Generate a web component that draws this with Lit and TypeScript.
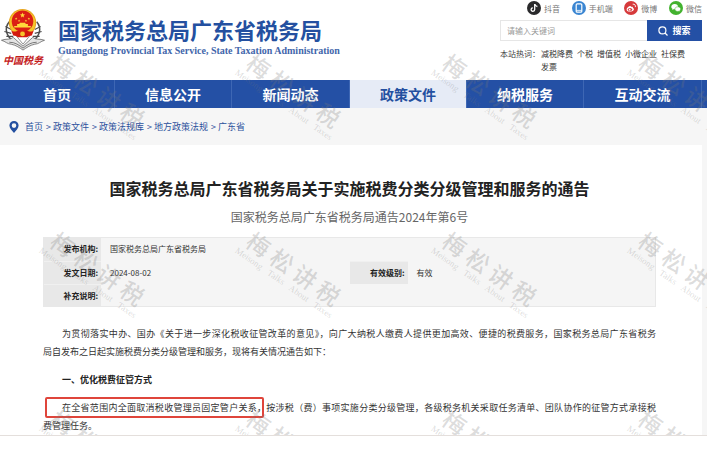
import { LitElement, html, css, svg, nothing } from "lit";
import { customElement } from "lit/decorators.js";

const NAV = ["首页", "信息公开", "新闻动态", "政策文件", "纳税服务", "互动交流"];
const ACTIVE = "政策文件";
const CRUMBS = ["首页", "政策文件", "政策法规库", "地方政策法规", "广东省"];
const HOT = ["减税降费", "个税", "增值税", "小微企业", "社保费", "发票"];

const star = (cx: number, cy: number, r: number) => {
  const pts: string[] = [];
  for (let i = 0; i < 10; i++) {
    const a = -Math.PI / 2 + (i * Math.PI) / 5;
    const k = i % 2 ? r * 0.42 : r;
    pts.push(`${(cx + k * Math.cos(a)).toFixed(2)},${(cy + k * Math.sin(a)).toFixed(2)}`);
  }
  return svg`<polygon points=${pts.join(" ")} fill="#ffd93b"/>`;
};

const emblem = html`<svg class="emblem" viewBox="0 0 46 48" role="img" aria-label="税徽">
  <g fill="none" stroke="#4c4c4c" stroke-width="1.5">
    <path d="M9 16C4 22 5 30 13 36M37 16c5 6 4 14-4 20"/>
    <path d="M5 21l6 3M4 26l7 2M6 31l7 0M10 17l3 4M41 21l-6 3M42 26l-7 2M40 31l-7 0M36 17l-3 4" stroke-width="1.2"/>
  </g>
  <path d="M1 35c5-2 9 0 12-3l10 9 10-9c3 3 7 1 12 3-4 1-6 4-10 4-5 1-9 4-12 6-3-2-7-5-12-6-4 0-6-3-10-4z" fill="#e4e4e4" stroke="#666" stroke-width=".8"/>
  <path d="M9 37c6 0 10 3 14 6 4-3 8-6 14-6" fill="none" stroke="#777" stroke-width="1"/>
  <path d="M15 29l8 10 8-10z" fill="#fff" stroke="#777" stroke-width=".8"/>
  <circle cx="22.500" cy="17" r="14" fill="#e8a51e"/>
  <circle cx="22.500" cy="17" r="13" fill="#f6c62b"/>
  <circle cx="22.500" cy="15.500" r="11" fill="#db1f14"/>
  ${star(22.5, 9.5, 2.8)}${star(16, 13, 1.3)}${star(19, 15, 1.3)}${star(26, 15, 1.3)}${star(29, 13, 1.3)}
  <path d="M14 22h17v-1.500h-3v-2h-2l-1-1.500h-5l-1 1.500h-2v2h-3z" fill="#ffd93b"/>
  <path d="M11 25c3 2 5 1 7 0l4.500 1.500L27 25c2 1 4 2 7 0l-2 5c-2 0-4 1-5 2h-9c-1-1-3-2-5-2z" fill="#d3190f"/>
  <circle cx="22.500" cy="28.500" r="2.500" fill="#f6c62b"/>
</svg>`;

const icons = {
  douyin: svg`<circle cx="7" cy="7" r="7" fill="#29292b"/>
    <path d="M7.700 3v5.600a1.800 1.800 0 1 1-1.800-1.800" fill="none" stroke="#fff" stroke-width="1.300"/>
    <path d="M7.700 3.200c.3 1.500 1.200 2.200 2.700 2.300" fill="none" stroke="#fff" stroke-width="1.300"/>`,
  phone: svg`<circle cx="7" cy="7" r="7" fill="#3b86d2"/>
    <rect x="4.200" y="2.800" width="5.600" height="8.400" rx="1" fill="none" stroke="#fff" stroke-width="1.200"/>
    <path d="M4.200 9.400h5.600" stroke="#fff" stroke-width=".8"/>`,
  weibo: svg`<circle cx="7" cy="7" r="7" fill="#d63a3c"/>
    <path d="M2.600 8.400c0-1.700 2.300-3.600 3.800-3.500.7.1.6.7.5 1.100 1.300-.4 2.300-.1 2 .9 1 .3 1.300 1.100.8 2-1.600 2.500-7.100 2.200-7.100-.5z" fill="#fff"/>
    <ellipse cx="6" cy="8.500" rx="2.200" ry="1.500" fill="#d63a3c"/><circle cx="5.700" cy="8.700" r=".9" fill="#fff"/>
    <path d="M8.700 3.200c1.900-.3 3.100 1 2.700 2.900" fill="none" stroke="#fff" stroke-width=".9"/>`,
  wechat: svg`<circle cx="7" cy="7" r="7" fill="#43b22e"/>
    <path d="M5.700 3C3.700 3 2.300 4.200 2.300 5.700c0 .9.500 1.600 1.200 2.100l-.3 1.100 1.300-.7c2.600.5 4.600-.8 4.600-2.500C9.100 4.200 7.700 3 5.700 3z" fill="#fff"/>
    <path d="M8.800 5.800c-1.700 0-2.900 1-2.900 2.300 0 1.500 1.600 2.700 3.800 2.200l1.100.6-.3-1c.7-.4 1.200-1 1.200-1.800 0-1.300-1.200-2.300-2.900-2.300z" fill="#fff" stroke="#43b22e" stroke-width=".5"/>`,
};

const SOCIAL = [
  { icon: icons.douyin, label: "抖音" },
  { icon: icons.phone, label: "手机端" },
  { icon: icons.weibo, label: "微博" },
  { icon: icons.wechat, label: "微信" },
];

@customElement("site-header")
class SiteHeader extends LitElement {
  static styles = css`
    :host { display: block; }
    .bar { display: flex; height: 80px; box-sizing: border-box; padding-right: 5px; }
    .logo { width: 46px; padding-top: 6px; display: flex; flex-direction: column; align-items: center; }
    .emblem { width: 46px; height: 47px; display: block; }
    .motto { color: #c4201c; font-size: 10px; line-height: 14px; font-weight: 700; font-style: italic; white-space: nowrap; }
    .names { flex: 1; padding: 14px 0 0 12px; color: #2450a0; white-space: nowrap; }
    .cn { margin: 0; font-size: 22px; line-height: 30px; font-weight: 700; }
    .en { margin: 0; font-family: "Liberation Serif", serif; font-size: 10px; line-height: 14px; font-weight: 700; color: #4266ab; }
    .side { width: 202px; font-size: 8px; }
    .social { display: flex; justify-content: space-between; padding: 1px 0 0 27px; height: 20px; box-sizing: border-box; }
    .social a { display: flex; align-items: center; gap: 3px; height: 14px; color: #777; text-decoration: none; }
    .social svg { width: 14px; height: 14px; }
    .search { display: flex; height: 21px; }
    .search input { flex: 1; min-width: 0; box-sizing: border-box; border: 1px solid #e6e6e6; border-right: 0; padding: 0 6px; font: inherit; color: #333; outline: 0; background: #fff; border-radius: 0; }
    .search input::placeholder { color: #999; opacity: 1; }
    .search button { width: 55px; border: 0; padding: 0; background: #2450a5; color: #fff; font: 700 9px "Noto Sans CJK SC", sans-serif; display: flex; align-items: center; justify-content: center; gap: 4px; }
    .search button svg { width: 10px; height: 10px; }
    .hot { display: flex; padding-top: 6px; line-height: 13px; color: #444; }
    .hot span { width: 41px; }
    .words { display: flex; flex-wrap: wrap; column-gap: 4px; flex: 1; }
    .words a { color: #333; text-decoration: none; }
    .nav { display: grid; grid-template-columns: 115fr 117fr 118fr 117fr 117fr 118fr 5fr; height: 28px; background: #2450a5; }
    .nav a { display: flex; align-items: center; justify-content: center; box-sizing: border-box; border-right: 1px solid #3e67b4; color: #fff; font-size: 14px; font-weight: 700; text-decoration: none; }
    .nav a.active { background: #e6ebf6; color: #2450a0; }
  `;
  render() {
    return html`
      <header class="bar">
        <div class="logo">${emblem}<span class="motto">中国税务</span></div>
        <div class="names">
          <p class="cn">国家税务总局广东省税务局</p>
          <p class="en">Guangdong Provincial Tax Service, State Taxation Administration</p>
        </div>
        <div class="side">
          <div class="social">
            ${SOCIAL.map((s) => html`<a href="#"><svg viewBox="0 0 14 14" aria-hidden="true">${s.icon}</svg>${s.label}</a>`)}
          </div>
          <form class="search" @submit=${(e: Event) => e.preventDefault()}>
            <input type="text" aria-label="关键词" placeholder="请输入关键词" />
            <button type="submit">
              <svg viewBox="0 0 10 10" fill="none" stroke="#fff" stroke-width="1.2" aria-hidden="true"><circle cx="4.400" cy="4.400" r="3.500"/><path d="M7 7l2.500 2.500"/></svg>搜索
            </button>
          </form>
          <div class="hot">
            <span>本站热词：</span>
            <div class="words">${HOT.map((w) => html`<a href="#">${w}</a>`)}</div>
          </div>
        </div>
      </header>
      <nav class="nav">
        ${NAV.map((n) => html`<a href="#" class=${n === ACTIVE ? "active" : ""}>${n}</a>`)}
      </nav>
    `;
  }
}

@customElement("notice-article")
class NoticeArticle extends LitElement {
  static styles = css`
    :host { display: block; }
    .sheet { margin-right: 5px; padding: 31px 46px 0 43px; background: #fff; color: #333; }
    .title { margin: 0; text-align: center; font-size: 16px; line-height: 24px; font-weight: 700; color: #222; white-space: nowrap; }
    .number { margin: 8px 0 11px; text-align: center; font-size: 12px; line-height: 18px; color: #666; }
    .meta { width: 100%; table-layout: fixed; border-collapse: collapse; background: #f5f5f5; outline: 1px solid #e8e8e8; outline-offset: -1px; font-size: 8px; line-height: 12px; }
    .label { width: 58px; }
    .meta th { padding: 0 3px 0 0; text-align: right; font-weight: 700; background: #e8e8e8; border-top: 1px solid #f0f0f0; color: #222; }
    .meta td { height: 23px; padding: 0 9px; }
    .body { padding-top: 18px; font-size: 9px; line-height: 18px; display: flex; flex-direction: column; gap: 10px; }
    .body p, .body h2 { margin: 0; }
    .body h2 { font-size: 9px; line-height: 18px; font-weight: 700; padding-left: 19px; color: #222; }
    .full { display: block; padding-left: 19px; text-align: justify; text-align-last: justify; white-space: nowrap; }
    .rest { display: block; }
    .key { position: relative; background: none; color: inherit; }
    .key::after { content: ""; position: absolute; inset: -4px 2px -4px -17px; border: 2px solid #df453b; border-radius: 2px; }
  `;
  render() {
    return html`
      <article class="sheet">
        <h1 class="title">国家税务总局广东省税务局关于实施税费分类分级管理和服务的通告</h1>
        <p class="number">国家税务总局广东省税务局通告2024年第6号</p>
        <table class="meta">
          <colgroup><col class="label" /><col /><col class="label" /><col /></colgroup>
          <tbody>
            <tr><th scope="row">发布机构:</th><td colspan="3">国家税务总局广东省税务局</td></tr>
            <tr><th scope="row">发文日期:</th><td>2024-08-02</td><th scope="row">有效级别:</th><td>有效</td></tr>
            <tr><th scope="row">补充说明:</th><td colspan="3"></td></tr>
          </tbody>
        </table>
        <div class="body">
          <p>
            <span class="full">为贯彻落实中办、国办《关于进一步深化税收征管改革的意见》，向广大纳税人缴费人提供更加高效、便捷的税费服务，国家税务总局广东省税务</span>
            <span class="rest">局自发布之日起实施税费分类分级管理和服务，现将有关情况通告如下：</span>
          </p>
          <h2>一、优化税费征管方式</h2>
          <p>
            <span class="full"><mark class="key">在全省范围内全面取消税收管理员固定管户关系，</mark>按涉税（费）事项实施分类分级管理，各级税务机关采取任务清单、团队协作的征管方式承接税</span>
            <span class="rest">费管理任务。</span>
          </p>
        </div>
      </article>
    `;
  }
}

@customElement("app-root")
class AppRoot extends LitElement {
  static styles = css`
    :host { display: block; min-height: 100vh; background: #fff; font-family: "Noto Sans CJK SC", sans-serif; }
    .page { position: relative; overflow: hidden; border-bottom: 1px solid #e4dfdc; background: #f6f6f6; }
    .head { display: block; background: #fff; }
    .crumbs { display: flex; align-items: center; height: 37px; padding-left: 9px; font-size: 9px; line-height: 14px; color: #2c519c; }
    .crumbs svg { width: 10px; height: 12px; margin-right: 6px; }
    .crumbs a { color: inherit; text-decoration: none; }
    .sep { padding: 0 2px 0 3px; }
    .marks { position: absolute; inset: 5px 0 0 -3px; overflow: hidden; pointer-events: none; display: grid; grid-template-columns: repeat(4, 196px); grid-auto-rows: 178px; place-items: center; color: rgba(120, 120, 120, 0.26); }
    .mark { width: 116px; transform: rotate(35deg); }
    .big { display: block; margin: 0 4px; font-size: 23px; line-height: 25px; font-weight: 500; text-align-last: justify; }
    .small { display: block; font-family: "Liberation Serif", serif; font-size: 9px; line-height: 10px; text-align-last: justify; white-space: nowrap; }
  `;
  render() {
    return html`
      <div class="page" lang="zh-CN">
        <site-header class="head"></site-header>
        <nav class="crumbs" aria-label="当前位置">
          <svg viewBox="0 0 10 12" aria-hidden="true"><path fill-rule="evenodd" fill="#2450a0" d="M5 0a4.600 4.600 0 0 1 4.600 4.600C9.600 7.300 6.800 9.800 5 12 3.200 9.800.4 7.300.4 4.600A4.600 4.600 0 0 1 5 0zm0 2.300a2.300 2.300 0 1 0 0 4.600 2.300 2.300 0 0 0 0-4.600z"/></svg>
          ${CRUMBS.map((c, i) => html`${i ? html`<span class="sep">&gt;</span>` : nothing}<a href="#">${c}</a>`)}
        </nav>
        <notice-article></notice-article>
        <div class="marks" aria-hidden="true">
          ${Array.from({ length: 12 }, () => html`<div class="mark"><span class="big">梅松讲税</span><span class="small">Meisong Talks About Taxes</span></div>`)}
        </div>
      </div>
    `;
  }
}
